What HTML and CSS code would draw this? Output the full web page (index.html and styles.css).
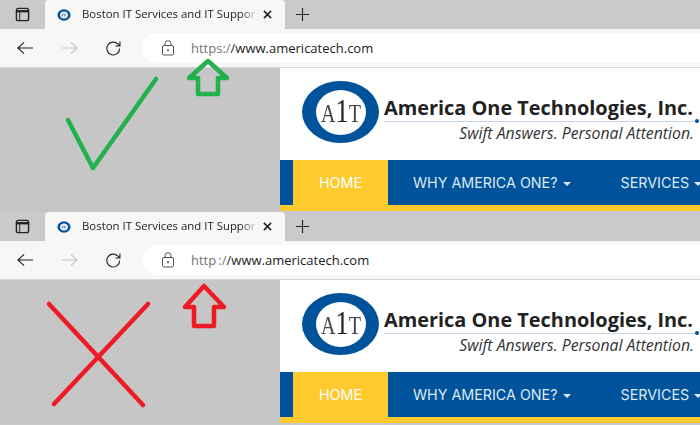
FILE: index.html
```html
<!DOCTYPE html>
<html lang="en">
<head>
    <meta charset="UTF-8">
    <title>HTTPS vs HTTP</title>
    <link rel="stylesheet" href="styles.css">
</head>
<body>

    <svg class="icon-defs" width="0" height="0">
        <symbol id="i-tabs" viewBox="0 0 16 16"><rect x="1.500" y="1.500" width="13" height="13" rx="2" fill="none" stroke="#222" stroke-width="1.500"/><path d="M1.500 4.500h13" fill="none" stroke="#222" stroke-width="2.500"/><path d="M5 4.500v10" fill="none" stroke="#222" stroke-width="1"/></symbol>
        <symbol id="i-favicon" viewBox="0 0 16 16"><ellipse cx="8" cy="8" rx="7.500" ry="6.500" fill="#00529b"/><ellipse cx="8" cy="8" rx="4.500" ry="4" fill="#e8eef4"/><path d="M6 9.500l1-3M9 6.500v3" stroke="#456" stroke-width="1"/></symbol>
        <symbol id="i-close" viewBox="0 0 10 10"><path d="M1 1l8 8M9 1l-8 8" fill="none" stroke="#222" stroke-width="1.700"/></symbol>
        <symbol id="i-plus" viewBox="0 0 16 16"><path d="M8 1v14M1 8h14" fill="none" stroke="#222" stroke-width="1.200"/></symbol>
        <symbol id="i-arrow" viewBox="0 0 18 14"><path d="M1 7h16M7.500 1L1 7l6.500 6" fill="none" stroke="currentColor" stroke-width="1.200"/></symbol>
        <symbol id="i-reload" viewBox="0 0 18 18"><path d="M15.500 9a6.800 6.800 0 1 1-2-4.800L15.500 6.200M15.800 1.500v4.900h-4.900" fill="none" stroke="#222" stroke-width="1.200"/></symbol>
        <symbol id="i-lock" viewBox="0 0 14 16"><rect x="1.500" y="5.500" width="11" height="9.500" rx="1.500" fill="none" stroke="#555" stroke-width="1"/><path d="M4 5.500V3.500a3 2.800 0 0 1 6 0v2" fill="none" stroke="#555" stroke-width="1"/><circle cx="7" cy="10.200" r="1" fill="#555"/></symbol>
    </svg>

    <section class="shot">
        <div class="tabstrip">
            <span class="tab-action"><svg class="icon-tabs"><use href="#i-tabs"/></svg></span>
            <div class="tab">
                <svg class="favicon"><use href="#i-favicon"/></svg>
                <span class="tab-title">Boston IT Services and IT Suppor</span>
                <svg class="tab-close"><use href="#i-close"/></svg>
            </div>
            <svg class="new-tab"><use href="#i-plus"/></svg>
        </div>
        <div class="toolbar">
            <svg class="nav-icon back"><use href="#i-arrow"/></svg>
            <svg class="nav-icon forward"><use href="#i-arrow"/></svg>
            <svg class="reload"><use href="#i-reload"/></svg>
            <div class="address">
                <svg class="lock"><use href="#i-lock"/></svg>
                <span class="url"><span class="scheme">https:/</span>/www.americatech.com</span>
            </div>
        </div>
        <div class="content">
            <div class="blank"></div>
            <div class="site">
                <header class="site-head">
                    <div class="logo"><span class="logo-text">A<b>1</b>T</span></div>
                    <div class="brand">
                        <div class="brand-name">America One Technologies, Inc.</div>
                        <div class="brand-tag">Swift Answers. Personal Attention.</div>
                        <i class="brand-dot"></i>
                    </div>
                </header>
                <nav class="site-nav">
                    <a class="active">HOME</a>
                    <a>WHY AMERICA ONE?<i class="caret"></i></a>
                    <a>SERVICES<i class="caret"></i></a>
                </nav>
            </div>
        </div>
        <!-- hand drawn marks on top of the screenshot -->
        <svg class="marks" viewBox="0 0 700 212">
            <path class="good" d="M68 120L93 168L156 79"/>
            <path class="good" d="M208 61L227 78H218V94H198V78H189Z"/>
        </svg>
    </section>

    <section class="shot">
        <div class="tabstrip">
            <span class="tab-action"><svg class="icon-tabs"><use href="#i-tabs"/></svg></span>
            <div class="tab">
                <svg class="favicon"><use href="#i-favicon"/></svg>
                <span class="tab-title">Boston IT Services and IT Suppor</span>
                <svg class="tab-close"><use href="#i-close"/></svg>
            </div>
            <svg class="new-tab"><use href="#i-plus"/></svg>
        </div>
        <div class="toolbar">
            <svg class="nav-icon back"><use href="#i-arrow"/></svg>
            <svg class="nav-icon forward"><use href="#i-arrow"/></svg>
            <svg class="reload"><use href="#i-reload"/></svg>
            <div class="address">
                <svg class="lock"><use href="#i-lock"/></svg>
                <span class="url"><span class="scheme">http&#8201;:/</span>/www.americatech.com</span>
            </div>
        </div>
        <div class="content">
            <div class="blank"></div>
            <div class="site">
                <header class="site-head">
                    <div class="logo"><span class="logo-text">A<b>1</b>T</span></div>
                    <div class="brand">
                        <div class="brand-name">America One Technologies, Inc.</div>
                        <div class="brand-tag">Swift Answers. Personal Attention.</div>
                        <i class="brand-dot"></i>
                    </div>
                </header>
                <nav class="site-nav">
                    <a class="active">HOME</a>
                    <a>WHY AMERICA ONE?<i class="caret"></i></a>
                    <a>SERVICES<i class="caret"></i></a>
                </nav>
            </div>
        </div>
        <svg class="marks" viewBox="0 0 700 212">
            <path class="bad" d="M49 92L143 193M148 92L54 192"/>
            <path class="bad" d="M204 74L224 95H214V114H194V95H185Z"/>
        </svg>
    </section>

</body>
</html>
```

FILE: styles.css
```css
* {
    box-sizing: border-box;
}
html, body {
    margin: 0;
    padding: 0;
}
body {
    width: 700px;
    height: 425px;
    overflow: hidden;
    background-color: #c8c8c8;
    font-family: "Open Sans", "Noto Sans", sans-serif;
}
.icon-defs {
    position: absolute;
}
.shot {
    position: relative;
    height: 212px;
    display: flex;
    flex-direction: column;
}

/* browser chrome */
.tabstrip {
    height: 29px;
    display: flex;
    align-items: center;
    background-color: #cacaca;
}
.tab-action {
    width: 45px;
    display: flex;
    justify-content: center;
}
.icon-tabs {
    width: 15px;
    height: 15px;
}
.tab {
    width: 240px;
    height: 29px;
    display: flex;
    align-items: center;
    padding-left: 11px;
    background-color: #f7f7f7;
    border-radius: 4px 4px 0 0;
}
.favicon {
    width: 16px;
    height: 14px;
    flex: none;
}
.tab-title {
    width: 176px;
    margin-left: 10px;
    padding-bottom: 3px;
    font-size: 11.400px;
    color: #222;
    white-space: nowrap;
    -webkit-mask-image: linear-gradient(to right, #000 90%, transparent 100%);
    mask-image: linear-gradient(to right, #000 90%, transparent 100%);
}
.tab-close {
    width: 9px;
    height: 9px;
    margin-left: 5px;
    flex: none;
}
.new-tab {
    width: 15px;
    height: 15px;
    margin-left: 10px;
}
.toolbar {
    height: 39px;
    display: flex;
    align-items: center;
    background-color: #f7f7f7;
    border-bottom: 1px solid #d9d9d9;
    color: #222;
}
.nav-icon {
    width: 17px;
    height: 14px;
    flex: none;
}
.back {
    margin-left: 17px;
}
.forward {
    margin-left: 27px;
    color: #c4c4c4;
    transform: scaleX(-1);
}
.reload {
    width: 17px;
    height: 17px;
    margin-left: 27px;
    flex: none;
}
.address {
    flex: 1;
    height: 30px;
    margin-left: 20px;
    padding-left: 19px;
    display: flex;
    align-items: center;
    background-color: #fff;
    border-radius: 15px 0 0 15px;
}
.lock {
    width: 14px;
    height: 16px;
    flex: none;
}
.url {
    margin-left: 16px;
    font-size: 13px;
    color: #222;
}
.scheme {
    color: #767676;
}

/* page below the toolbar */
.content {
    flex: 1;
    display: flex;
    min-height: 0;
}
.blank {
    width: 280px;
    background-color: #c6c6c6;
}
.site {
    flex: 1;
    min-width: 0;
    display: flex;
    flex-direction: column;
    overflow: hidden;
}
.site-head {
    height: 92px;
    display: flex;
    align-items: flex-start;
    padding: 13px 0 0 22px;
    background-color: #fff;
}
.logo {
    width: 77px;
    height: 62px;
    flex: none;
    display: flex;
    align-items: center;
    justify-content: center;
    border-radius: 50%;
    border: solid #00529b;
    border-width: 9px 13px 8px 14px;
    background-color: #fff;
}
.logo-text {
    font-family: "Liberation Serif", serif;
    font-size: 25px;
    line-height: 30px;
    color: #444;
    white-space: nowrap;
    transform: scaleX(0.8);
}
.logo-text b {
    font-size: 33px;
    font-weight: 400;
    color: #222;
}
.brand {
    position: relative;
    width: 313px;
    flex: none;
    margin: 14px 0 0 5px;
}
.brand-name {
    height: 27px;
    font-size: 19.900px;
    font-weight: 700;
    line-height: 26px;
    color: #222;
    white-space: nowrap;
    border-bottom: 1px solid #c5d5e6;
}
.brand-tag {
    padding-right: 3px;
    font-size: 15.800px;
    font-style: italic;
    line-height: 22px;
    color: #333;
    text-align: right;
    white-space: nowrap;
}
.brand-dot {
    position: absolute;
    right: -2px;
    top: 24px;
    width: 4px;
    height: 4px;
    border-radius: 50%;
    background-color: #00529b;
}
.site-nav {
    height: 51px;
    display: flex;
    padding-left: 13px;
    background-color: #00529b;
    border-bottom: 6px solid #ffca2e;
}
.site-nav a {
    flex: none;
    padding: 0 25px;
    font-family: Inter, "Open Sans", sans-serif;
    font-size: 14.300px;
    line-height: 45px;
    color: #dfe9f3;
    white-space: nowrap;
}
.site-nav a.active {
    width: 95px;
    padding: 0;
    text-align: center;
    background-color: #ffca2e;
    color: #fff;
}
.caret {
    display: inline-block;
    margin-left: 5px;
    vertical-align: middle;
    border-top: 4px solid #dfe9f3;
    border-left: 4px solid transparent;
    border-right: 4px solid transparent;
}

/* marks drawn over the screenshot */
.marks {
    position: absolute;
    left: 0;
    top: 0;
    width: 700px;
    height: 212px;
    pointer-events: none;
}
.marks path {
    fill: none;
    stroke-width: 4.500;
    stroke-linecap: round;
    stroke-linejoin: round;
}
.good {
    stroke: #22b14c;
}
.bad {
    stroke: #ed1c24;
}
```
